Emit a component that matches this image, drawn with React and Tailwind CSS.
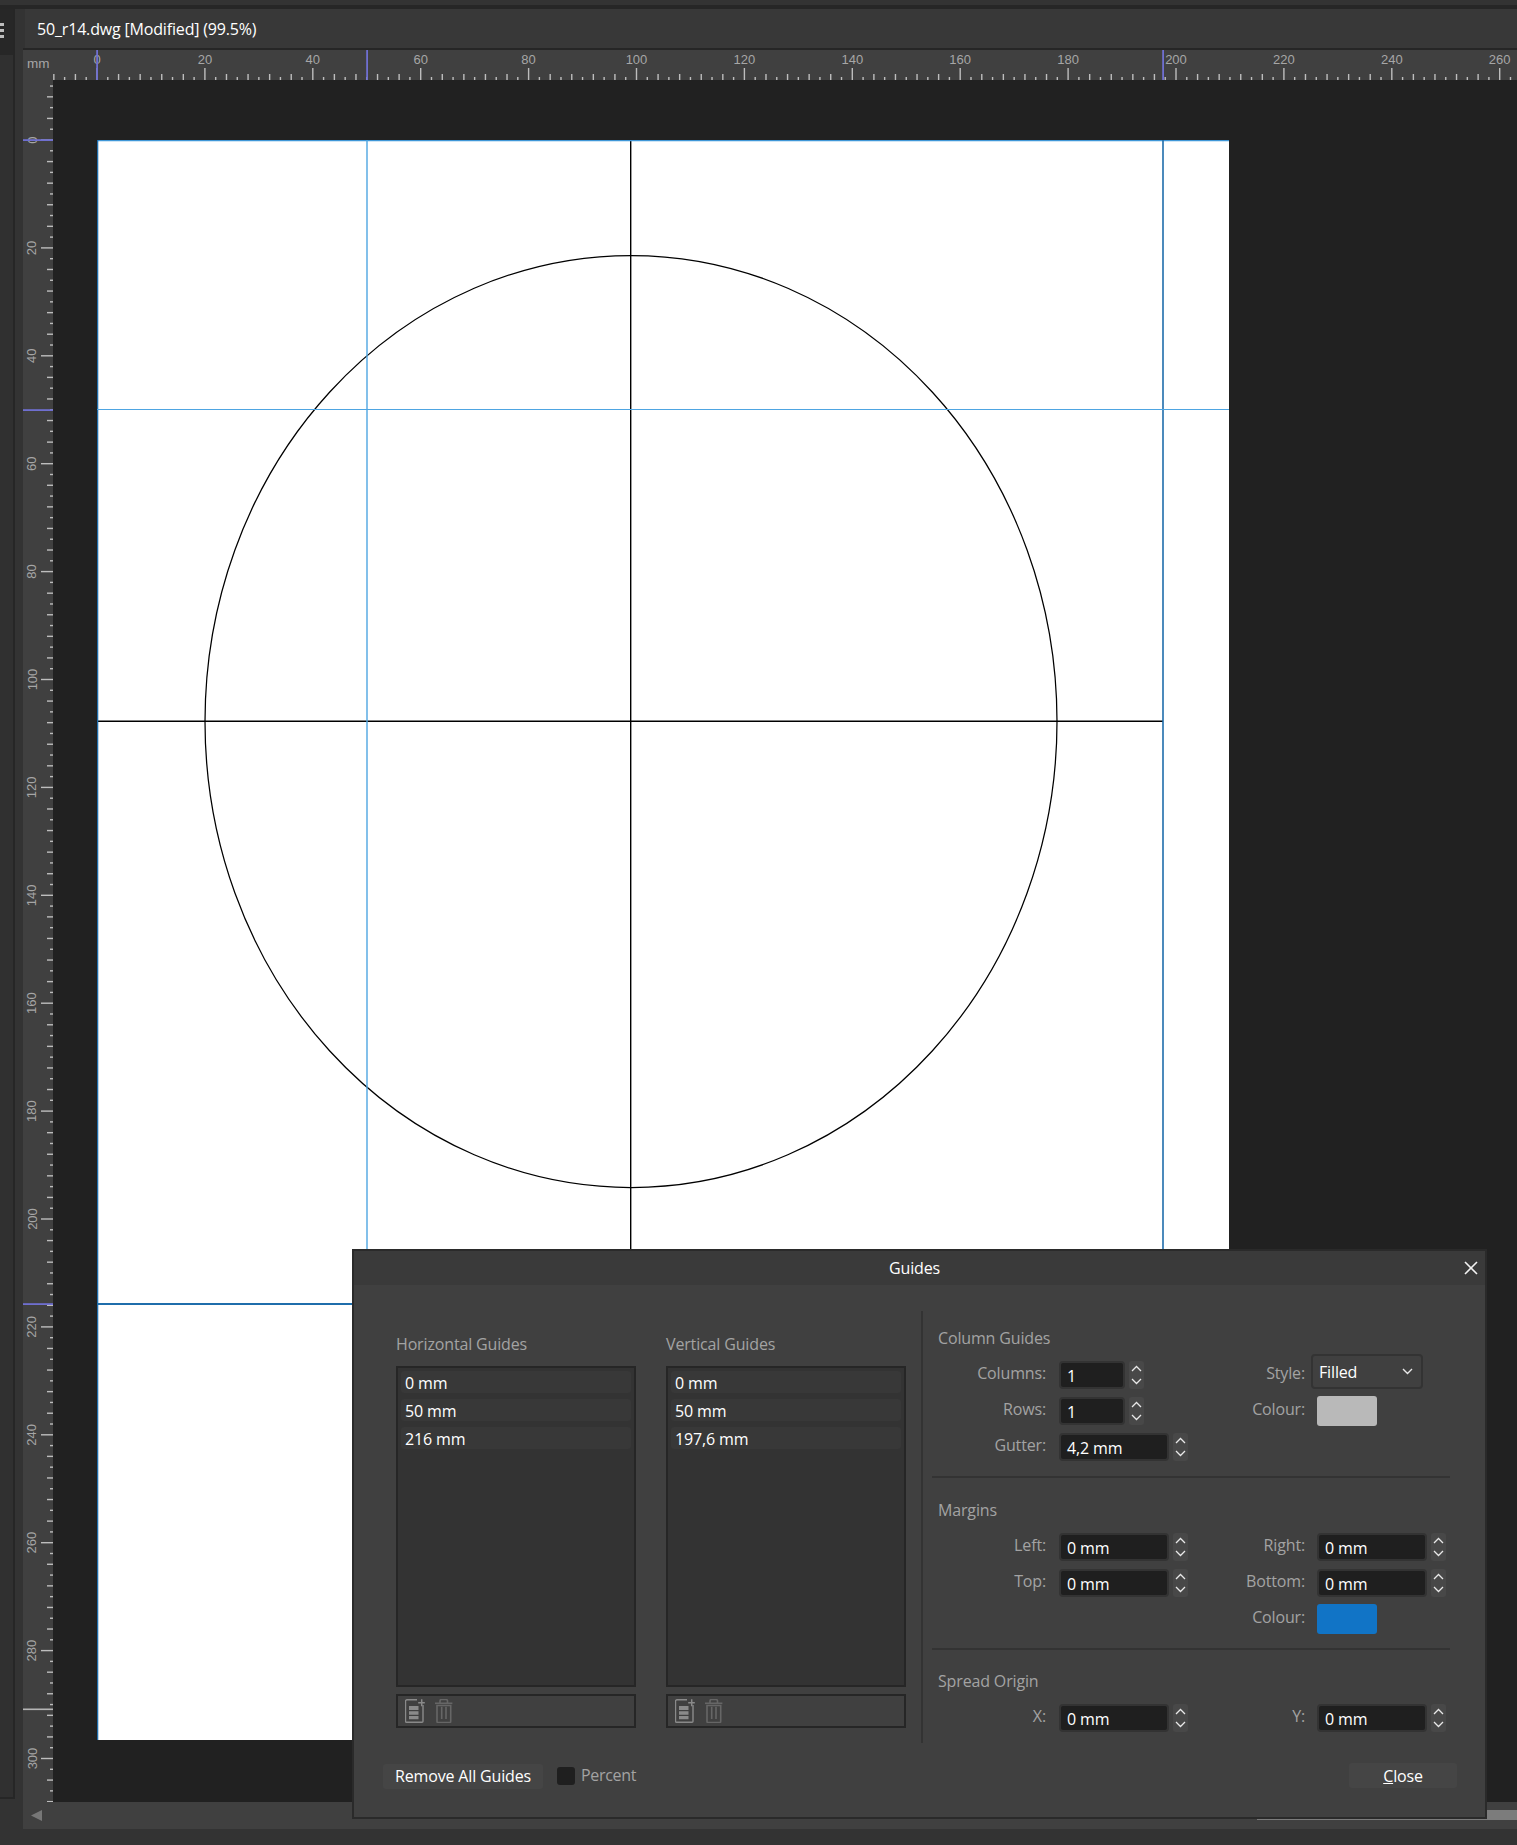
const MM = 5.395;
const ORIGIN_X = 74; // page left inside the top ruler
const ORIGIN_Y = 60; // page top inside the left ruler

function rulerMarks(length, origin) {
  const marks = [];
  for (let i = -6; i * 2 * MM + origin < length; i++) {
    const pos = origin + i * 2 * MM;
    if (pos < 30 && origin === ORIGIN_X) continue;
    if (pos < 0) continue;
    const size = i % 10 === 0 ? 12 : i % 2 === 0 ? 6 : 3;
    marks.push({ i, pos, size });
  }
  return marks;
}

function TopRuler() {
  const marks = rulerMarks(1494, ORIGIN_X);
  return (
    <svg width="1494" height="30" className="block font-['Liberation_Sans',sans-serif]">
      <text x="4" y="18" fontSize="13.5" fill="#a6a6a6">mm</text>
      {marks.map((m) => (
        <rect key={m.i} x={m.pos - 0.7} y={30 - m.size} width="1.4" height={m.size} fill="#bdbdbd" />
      ))}
      {marks.filter((m) => m.i % 10 === 0 && m.i >= 0).map((m) => (
        <text key={m.i} x={m.pos} y="13.5" fontSize="13" textAnchor="middle" fill="#a6a6a6">{m.i * 2}</text>
      ))}
      {[74, 344, 1140].map((x) => (
        <rect key={x} x={x - 0.8} y="0" width="1.8" height="30" fill="#6f6fd0" />
      ))}
    </svg>
  );
}

function LeftRuler() {
  const marks = rulerMarks(1722, ORIGIN_Y);
  return (
    <svg width="30" height="1722" className="block shrink-0 bg-[#404040] font-['Liberation_Sans',sans-serif]">
      {marks.map((m) => (
        <rect key={m.i} x={30 - m.size} y={m.pos - 0.7} width={m.size} height="1.4" fill="#bdbdbd" />
      ))}
      {marks.filter((m) => m.i % 10 === 0 && m.i >= 0).map((m) => (
        <text
          key={m.i}
          x="13.5"
          y={m.pos}
          fontSize="13"
          textAnchor="middle"
          fill="#a6a6a6"
          transform={`rotate(-90 13.5 ${m.pos})`}
        >
          {m.i * 2}
        </text>
      ))}
      {[60, 330, 1224].map((y) => (
        <rect key={y} x="0" y={y - 0.8} width="30" height="1.8" fill="#6f6fd0" />
      ))}
      <rect x="0" y="1628.5" width="30" height="1.6" fill="#b5b5b5" />
    </svg>
  );
}

function PageDrawing() {
  return (
    <svg width="1132" height="1600" className="absolute left-0 top-0">
      <ellipse cx="534" cy="581.5" rx="426" ry="466" fill="none" stroke="#000" strokeWidth="1.25" />
      <line x1="533.7" y1="0" x2="533.7" y2="1110" stroke="#000" strokeWidth="1.4" />
      <line x1="0" y1="581.3" x2="1066" y2="581.3" stroke="#000" strokeWidth="1.4" />
      <line x1="0" y1="0.5" x2="1132" y2="0.5" stroke="#3f97d8" strokeWidth="1.4" />
      <line x1="0.5" y1="0" x2="0.5" y2="1600" stroke="#1f6dab" strokeWidth="1.6" />
      <line x1="270" y1="0" x2="270" y2="1110" stroke="#4ea5e2" strokeWidth="1.4" />
      <line x1="1066" y1="0" x2="1066" y2="1110" stroke="#1f6dab" strokeWidth="1.6" />
      <line x1="0" y1="269.5" x2="1132" y2="269.5" stroke="#4ea5e2" strokeWidth="1.2" />
      <line x1="0" y1="1164" x2="260" y2="1164" stroke="#1f6dab" strokeWidth="1.8" />
    </svg>
  );
}

function Chevron({ up }) {
  return (
    <svg width="11" height="7" viewBox="0 0 11 7" fill="none" stroke="#e8e8e8" strokeWidth="1.3">
      <polyline points={up ? "1,6 5.5,1.5 10,6" : "1,1 5.5,5.5 10,1"} />
    </svg>
  );
}

function Spinner() {
  return (
    <div className="ml-[4px] flex h-[28px] w-[15px] flex-col items-center justify-center gap-[6px] rounded-[3px] bg-[#484848]">
      <Chevron up />
      <Chevron />
    </div>
  );
}

function NumberField({ value, width = "w-[110px]" }) {
  return (
    <div className="flex items-center">
      <div className={`${width} flex h-[28px] items-center rounded-[4px] border-2 border-[#333333] bg-[#1f1f1f] pl-[6px] pt-[2px] text-white`}>
        {value}
      </div>
      <Spinner />
    </div>
  );
}

function FieldLabel({ children, width }) {
  return <div className={`${width} pb-[4px] text-right text-[#a3a3a3]`}>{children}</div>;
}

function SectionTitle({ children }) {
  return <div className="ml-[6px] h-[20px] leading-[20px] text-[#a3a3a3]">{children}</div>;
}

function FieldRow({ left, right }) {
  return (
    <div className="flex h-[28px] items-center">
      <div className="flex w-[256px] items-center">
        {left && (
          <>
            <FieldLabel width="w-[114px]">{left.label}</FieldLabel>
            <div className="ml-[13px]">
              <NumberField value={left.value} width={left.width} />
            </div>
          </>
        )}
      </div>
      {right && (
        <div className="flex items-center">
          <FieldLabel width="w-[117px]">{right.label}</FieldLabel>
          <div className="ml-[12px]">{right.control}</div>
        </div>
      )}
    </div>
  );
}

function Swatch({ className }) {
  return <div className={`h-[30px] w-[60px] rounded-[3px] ${className}`} />;
}

function GuideList({ title, items }) {
  return (
    <div className="w-[240px]">
      <div className="h-[20px] leading-[20px] text-[#a3a3a3]">{title}</div>
      <div className="mt-[12px] flex h-[321px] flex-col gap-[6px] border-2 border-[#262626] bg-[#333333] px-[3px] pt-[3px]">
        {items.map((item) => (
          <div key={item} className="flex h-[22px] items-center rounded-[3px] bg-[#383838] pl-[4px] pt-[2px] text-white">
            {item}
          </div>
        ))}
      </div>
      <div className="mt-[7px] flex h-[34px] items-center gap-[10px] border-2 border-[#262626] pl-[7px]">
        <svg width="20" height="24" viewBox="0 0 20 24" fill="none">
          <path d="M12 0.7H2a1.5 1.5 0 0 0-1.5 1.5v20a1 1 0 0 0 1 1h15.5a1 1 0 0 0 1-1V6" stroke="#8a8a8a" strokeWidth="1.4" />
          <path d="M4 7h9.5v4H4zM4 12.3h9.5v3.4H4zM4 17h9.5v3.2H4z" fill="#8a8a8a" />
          <path d="M16.7 0.2v7M13.2 3.7h6.6" stroke="#8a8a8a" strokeWidth="1.5" />
        </svg>
        <svg width="18" height="24" viewBox="0 0 18 24" fill="none" stroke="#666666" strokeWidth="1.6">
          <path d="M0 4.3h17.4" />
          <path d="M5 4.3V2a1.5 1.5 0 0 1 1.5-1.5h4.5A1.5 1.5 0 0 1 12.5 2v2.3" />
          <path d="M2 6.5h13.7v16a1 1 0 0 1-1 1H3a1 1 0 0 1-1-1z" />
          <path d="M6.7 7.7V20M11 7.7V20" />
        </svg>
      </div>
    </div>
  );
}

function GuidesDialog() {
  return (
    <div className="absolute left-[352px] top-[1249px] flex h-[570px] w-[1135px] flex-col border-2 border-[#2a2a2a] bg-[#404040] text-[16px] font-['Open_Sans',sans-serif] tracking-[-0.15px]">
      <div className="relative flex h-[34px] shrink-0 items-center justify-center bg-[#3a3a3a] pr-[10px] text-white">
        Guides
        <svg width="14" height="14" viewBox="0 0 14 14" className="absolute right-[7px] top-[10px]" stroke="#f2f2f2" strokeWidth="1.6">
          <path d="M1 1l12 12M13 1L1 13" />
        </svg>
      </div>

      <div className="mt-[26px] flex h-[432px] shrink-0">
        <div className="ml-[42px] flex gap-[30px] pt-[23px]">
          <GuideList title="Horizontal Guides" items={["0 mm", "50 mm", "216 mm"]} />
          <GuideList title="Vertical Guides" items={["0 mm", "50 mm", "197,6 mm"]} />
        </div>

        <div className="ml-[15px] w-[540px] border-l-2 border-[#333333] pl-[9px]">
          <div className="w-[518px]">
            <div className="pt-[17px]">
              <SectionTitle>Column Guides</SectionTitle>
              <div className="mt-[13px] flex flex-col gap-[8px]">
                <FieldRow
                  left={{ label: "Columns:", value: "1", width: "w-[66px]" }}
                  right={{
                    label: "Style:",
                    control: (
                      <div className="-mt-[7px] -ml-[6px] flex h-[35px] w-[112px] items-center justify-between rounded-[4px] border-2 border-[#333333] pl-[6px] pr-[8px] text-white">
                        Filled
                        <svg width="11" height="7" viewBox="0 0 11 7" fill="none" stroke="#e8e8e8" strokeWidth="1.4">
                          <polyline points="1,1 5.5,5.5 10,1" />
                        </svg>
                      </div>
                    ),
                  }}
                />
                <FieldRow
                  left={{ label: "Rows:", value: "1", width: "w-[66px]" }}
                  right={{ label: "Colour:", control: <Swatch className="bg-[#b9b9b9]" /> }}
                />
                <FieldRow left={{ label: "Gutter:", value: "4,2 mm" }} />
              </div>
            </div>
            <div className="mt-[15px] h-[2px] bg-[#333333]" />
            <div className="pt-[22px]">
              <SectionTitle>Margins</SectionTitle>
              <div className="mt-[13px] flex flex-col gap-[8px]">
                <FieldRow
                  left={{ label: "Left:", value: "0 mm" }}
                  right={{ label: "Right:", control: <NumberField value="0 mm" /> }}
                />
                <FieldRow
                  left={{ label: "Top:", value: "0 mm" }}
                  right={{ label: "Bottom:", control: <NumberField value="0 mm" /> }}
                />
                <FieldRow right={{ label: "Colour:", control: <Swatch className="bg-[#1174c6]" /> }} />
              </div>
            </div>
            <div className="mt-[15px] h-[2px] bg-[#333333]" />
            <div className="pt-[21px]">
              <SectionTitle>Spread Origin</SectionTitle>
              <div className="mt-[13px]">
                <FieldRow
                  left={{ label: "X:", value: "0 mm" }}
                  right={{ label: "Y:", control: <NumberField value="0 mm" /> }}
                />
              </div>
            </div>
          </div>
        </div>
      </div>

      <div className="mt-[20px] flex items-start justify-between pl-[29px] pr-[28px]">
        <div className="flex items-center">
          <div className="flex h-[25px] w-[160px] items-center justify-center rounded-[3px] bg-[#454545] text-white">
            Remove All Guides
          </div>
          <div className="ml-[14px] h-[18px] w-[18px] rounded-[3px] bg-[#1f1f1f]" />
          <div className="ml-[6px] pb-[2px] tracking-[-0.3px] text-[#a3a3a3]">Percent</div>
        </div>
        <div className="flex h-[25px] w-[108px] items-center justify-center rounded-[3px] bg-[#454545] text-white">
          <span className="underline">C</span>lose
        </div>
      </div>
    </div>
  );
}

export default function App() {
  return (
    <div className="relative flex h-[1845px] w-[1517px] flex-col overflow-hidden bg-[#333333]">
      <div className="h-[5px] shrink-0 bg-[#333333]" />
      <div className="h-[4px] shrink-0 bg-[#262626]" />

      <div className="flex flex-1">
        {/* left tool strip */}
        <div className="flex w-[23px] shrink-0">
          <div className="flex h-[1790px] w-[13px] flex-col border-b-2 border-[#262626]">
            <div className="flex h-[46px] flex-col gap-[3px] bg-[#272727] pt-[14px]">
              <div className="h-[3px] w-[4px] bg-[#bdbdbd]" />
              <div className="h-[3px] w-[4px] bg-[#bdbdbd]" />
              <div className="h-[3px] w-[4px] bg-[#bdbdbd]" />
            </div>
            <div className="flex-1 bg-[#303030]" />
          </div>
          <div className="h-[1790px] w-[2px] bg-[#262626]" />
        </div>

        <div className="flex min-w-0 flex-1 flex-col">
          <div className="ml-[2px] flex h-[39px] shrink-0 items-center bg-[#383838] pl-[12px] pt-[1px] font-['Open_Sans',sans-serif] text-[16px] tracking-[-0.17px] text-white">
            50_r14.dwg [Modified] (99.5%)
          </div>
          <div className="h-[2px] shrink-0 bg-[#262626]" />
          <div className="h-[30px] shrink-0 bg-[#404040]">
            <TopRuler />
          </div>
          <div className="flex h-[1722px] shrink-0">
            <LeftRuler />
            <div className="flex-1 bg-[#212121] pl-[44px] pt-[60px]">
              <div className="relative h-[1600px] w-[1132px] bg-white">
                <PageDrawing />
              </div>
            </div>
          </div>
          {/* bottom scrollbar */}
          <div className="flex h-[27px] shrink-0 justify-between bg-[#404040] pt-[8px]">
            <svg width="12" height="11" viewBox="0 0 12 11" className="ml-[8px]">
              <polygon points="0,5.5 11,0 11,11" fill="#777777" />
            </svg>
            <div className="h-[10px] w-[260px] bg-[#7c7c7c]" />
          </div>
        </div>
      </div>

      <GuidesDialog />
    </div>
  );
}
